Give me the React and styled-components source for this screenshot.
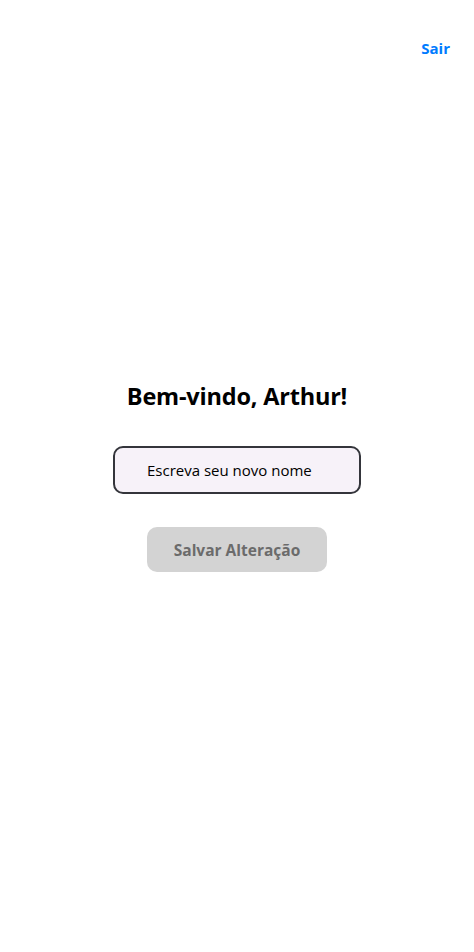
import React, { useState } from "react";
import styled, { createGlobalStyle } from "styled-components";

const GlobalStyle = createGlobalStyle`
    html, body {
        margin: 0;
        padding: 0;
        background: #fff;
    }
    body {
        font-family: "Open Sans", "Noto Sans", "Liberation Sans", sans-serif;
    }
`

const Page = styled.div`
    position: relative;
    min-height: 100vh;
    display: flex;
    flex-direction: column;
    align-items: center;
    justify-content: center;
`

const LogoutButton = styled.button`
    position: absolute;
    top: 38px;
    right: 24px;
    border: none;
    background: none;
    padding: 0;
    font-family: inherit;
    font-size: 15px;
    font-weight: 700;
    color: #007bff;
    cursor: pointer;
`

const Content = styled.div`
    display: flex;
    flex-direction: column;
    align-items: center;
    margin-top: 0;
`

const Title = styled.h1`
    margin: 0 0 34px 0;
    font-size: 23.5px;
    line-height: 32px;
    font-weight: 700;
    color: #000;
    letter-spacing: -0.2px;
`

const NameInput = styled.input`
    box-sizing: border-box;
    width: 248px;
    height: 48px;
    padding: 0 16px 0 32px;
    border: 2px solid #34353b;
    border-radius: 10px;
    background: #f7f2f9;
    font-family: inherit;
    font-size: 15px;
    color: #000;
    outline: none;
    &::placeholder {
        color: #000;
    }
`

const SaveButton = styled.button`
    margin-top: 33px;
    width: 180px;
    height: 45px;
    border: none;
    border-radius: 10px;
    background: #d3d3d3;
    color: #6b6b6b;
    font-family: inherit;
    font-size: 15.5px;
    font-weight: 700;
    cursor: ${props => props.disabled ? 'default' : 'pointer'};
`

const App = () => {
    const [name, setName] = useState('');
    return (
        <Page>
            <GlobalStyle/>
            <LogoutButton>Sair</LogoutButton>
            <Content>
                <Title>Bem-vindo, Arthur!</Title>
                <NameInput
                    placeholder="Escreva seu novo nome"
                    value={name}
                    onChange={e => setName(e.target.value)}
                />
                <SaveButton disabled={!name}>Salvar Alteração</SaveButton>
            </Content>
        </Page>
    )
}

export default App;
